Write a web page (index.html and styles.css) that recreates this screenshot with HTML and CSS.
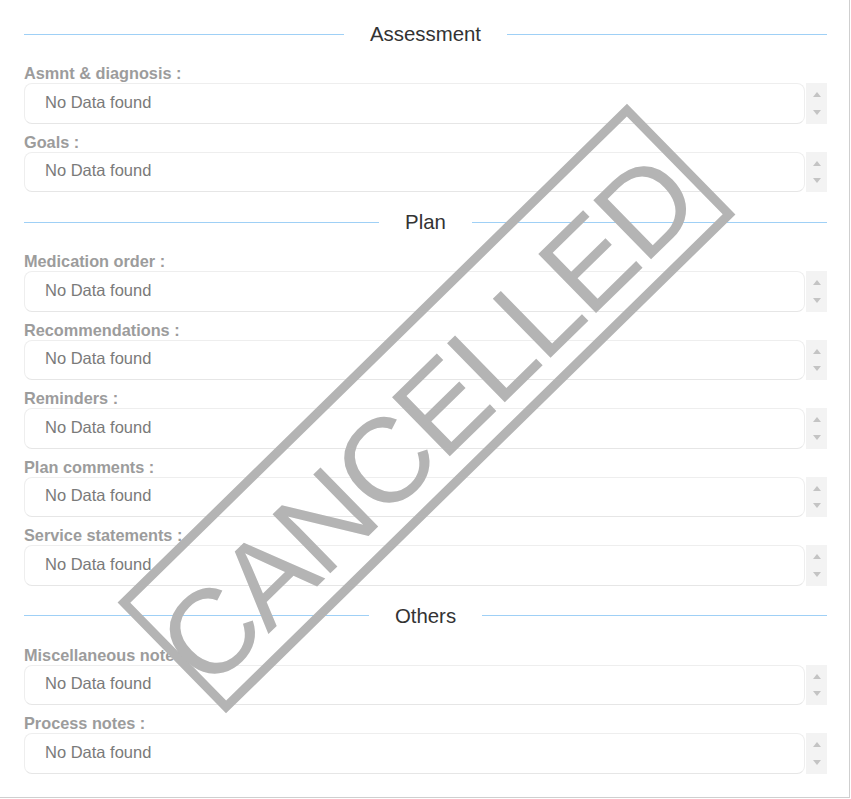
FILE: index.html
```html
<!DOCTYPE html>
<html>
<head>
<meta charset="utf-8">
<link rel="stylesheet" href="styles.css">
</head>
<body>
<div class="page">
  <div class="section-title"><span>Assessment</span></div>
  <div class="field">
    <div class="label">Asmnt &amp; diagnosis :</div>
    <div class="box"><div class="ta">No Data found</div><div class="sb"><i class="up"></i><i class="down"></i></div></div>
  </div>
  <div class="field">
    <div class="label">Goals :</div>
    <div class="box"><div class="ta">No Data found</div><div class="sb"><i class="up"></i><i class="down"></i></div></div>
  </div>

  <div class="section-title"><span>Plan</span></div>
  <div class="field">
    <div class="label">Medication order :</div>
    <div class="box"><div class="ta">No Data found</div><div class="sb"><i class="up"></i><i class="down"></i></div></div>
  </div>
  <div class="field">
    <div class="label">Recommendations :</div>
    <div class="box"><div class="ta">No Data found</div><div class="sb"><i class="up"></i><i class="down"></i></div></div>
  </div>
  <div class="field">
    <div class="label">Reminders :</div>
    <div class="box"><div class="ta">No Data found</div><div class="sb"><i class="up"></i><i class="down"></i></div></div>
  </div>
  <div class="field">
    <div class="label">Plan comments :</div>
    <div class="box"><div class="ta">No Data found</div><div class="sb"><i class="up"></i><i class="down"></i></div></div>
  </div>
  <div class="field">
    <div class="label">Service statements :</div>
    <div class="box"><div class="ta">No Data found</div><div class="sb"><i class="up"></i><i class="down"></i></div></div>
  </div>

  <div class="section-title"><span>Others</span></div>
  <div class="field">
    <div class="label">Miscellaneous notes :</div>
    <div class="box"><div class="ta">No Data found</div><div class="sb"><i class="up"></i><i class="down"></i></div></div>
  </div>
  <div class="field">
    <div class="label">Process notes :</div>
    <div class="box"><div class="ta">No Data found</div><div class="sb"><i class="up"></i><i class="down"></i></div></div>
  </div>

  <div class="stamp"><span>CANCELLED</span></div>
</div>
</body>
</html>
```
FILE: styles.css
```css
html, body {
  margin: 0;
  padding: 0;
  background: #fff;
}

body {
  font-family: "Liberation Sans", Arial, sans-serif;
}

.page {
  position: relative;
  box-sizing: border-box;
  width: 850px;
  height: 798px;
  padding: 13px 22px 0 24px;
  border-right: 1px solid #cfcfcf;
  border-bottom: 1px solid #cfcfcf;
  overflow: hidden;
}

.section-title {
  display: flex;
  align-items: center;
  height: 42px;
  margin-bottom: 9px;
}

.section-title::before,
.section-title::after {
  content: "";
  flex: 1;
  height: 1px;
  background: #9fd0f6;
}

.section-title span {
  padding: 0 26px;
  font-size: 20.4px;
  color: #333;
  line-height: 24px;
}

.field {
  margin-bottom: 9px;
}

.label {
  font-size: 16.3px;
  font-weight: bold;
  color: #9c9c9c;
  line-height: 18px;
  height: 18px;
  margin-bottom: 1px;
  white-space: nowrap;
}

.box {
  display: flex;
  height: 40.5px;
  gap: 1px;
}

.ta {
  flex: 1;
  box-sizing: border-box;
  border: 1px solid #eeeeee;
  border-bottom-color: #e6e6e6;
  border-radius: 8px;
  padding: 0 0 2px 20px;
  display: flex;
  align-items: center;
  font-size: 16.5px;
  color: #7a7a7a;
}

.sb {
  width: 21px;
  background: #f3f3f3;
  display: flex;
  flex-direction: column;
  align-items: center;
  justify-content: space-between;
  padding: 9px 0 9px;
  box-sizing: border-box;
}

.sb i {
  display: block;
  width: 0;
  height: 0;
  border-left: 4.5px solid transparent;
  border-right: 4.5px solid transparent;
}

.sb .up {
  border-bottom: 5px solid #c4c4c4;
}

.sb .down {
  border-top: 5px solid #c4c4c4;
}

.stamp {
  position: absolute;
  left: 70px;
  top: 331px;
  width: 713px;
  height: 155px;
  box-sizing: border-box;
  border: 9px solid #b4b4b4;
  transform: rotate(-44.4deg);
  display: flex;
  align-items: center;
  justify-content: center;
  pointer-events: none;
}

.stamp span {
  font-family: "Liberation Sans", Arial, sans-serif;
  font-size: 120px;
  line-height: 1;
  letter-spacing: -3px;
  color: #b4b4b4;
  white-space: nowrap;
  padding-top: 16px;
  margin-left: -16px;
}
```
